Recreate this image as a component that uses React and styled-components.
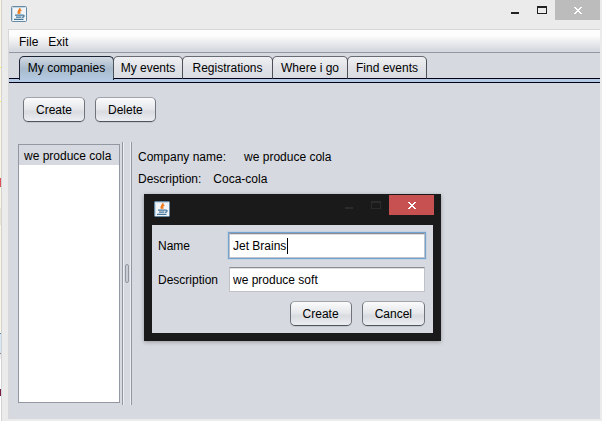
import React from "react";
import styled, { createGlobalStyle, css } from "styled-components";

const GlobalStyle = createGlobalStyle`
  * { box-sizing: border-box; }
  html, body, #root { height: 100%; margin: 0; }
  body {
    font: 12px/16px "Liberation Sans", Arial, sans-serif;
    color: #000;
    overflow: hidden;
  }
`;

const Desktop = styled.div`
  display: flex;
  height: 100vh;
`;

const EditorEdge = styled.div`
  flex: none;
  width: 2px;
  border-right: 1px solid #d2d2d2;
  background: linear-gradient(
    #fcf7e3 0 67px, #fbf05a 67px 68px, #fcf7e3 68px 101px, #fbf05a 101px 102px,
    #fcf7e3 102px 178px, #e0505c 178px 187px, #fcf7e3 187px 208px, #ece6d4 208px 225px,
    #fcf7e3 225px 333px, #4f87a5 333px 334px, #d6e8f8 334px 353px, #808488 353px 354px,
    #ececec 354px 359px, #ffffff 359px 389px, #7a2048 389px 396px, #ffffff 396px
  );
`;

const Frame = styled.div`
  flex: 1;
  min-width: 0;
  display: flex;
  flex-direction: column;
  padding: 0 2px 2px 6px;
  background: #ebebeb;
`;

const TitleBar = styled.header`
  display: flex;
  justify-content: space-between;
  align-items: flex-start;
  height: 29px;
  padding: 6px 0 0 3px;
`;

const WindowButtons = styled.div`
  display: flex;
  margin-top: -6px;
`;

const WindowButton = styled.button`
  display: grid;
  place-items: center;
  width: 27px;
  height: 20px;
  padding: 0;
  border: 0;
  background: none;
  color: #222;
  ${(p) =>
    p.$close &&
    css`
      width: 45px;
      background: #bcbcbc;
      color: #fff;
    `}
`;

const Client = styled.div`
  flex: 1;
  min-height: 0;
  display: flex;
  flex-direction: column;
  border: 1px solid #d8d8d8;
  border-right-width: 0;
  border-bottom-width: 0;
  background: #d6d9df;
`;

const MenuBar = styled.nav`
  display: flex;
  gap: 10px;
  height: 23px;
  padding: 4px 10px 0;
  border-bottom: 1px solid #9297a1;
  background: linear-gradient(#fdfdfd 0 25%, #e9eaed 60%, #d6d9df 90%);
`;

const MenuItem = styled.button`
  height: 16px;
  padding: 0;
  border: 0;
  background: none;
  font: inherit;
  color: #000;
`;

const TabStrip = styled.div`
  display: flex;
  flex: none;
  height: 30px;
  padding: 3px 10px 0;
  border-bottom: 1px solid #00001a;
  background: linear-gradient(transparent 25px, #00001a 25px 26px, #b4cae2 26px);
`;

const Tab = styled.button`
  width: ${(p) => p.$width}px;
  height: 23px;
  margin-right: -1px;
  padding: 1px 0 0;
  border: 1px solid #4c5058;
  border-top-color: #686b73;
  border-bottom-color: #00001a;
  border-radius: 5px 5px 0 0;
  background: linear-gradient(#f0f1f3, #e0e2e7 50%, #d9dce2);
  font: inherit;
  color: #000;
  white-space: nowrap;
  ${(p) =>
    p.$selected &&
    css`
      height: 24px;
      border-color: #1d2334;
      border-bottom: 0;
      padding-bottom: 2px;
      background: linear-gradient(#d2dae3, #a8bacb 50%, #b4cae2);
    `}
`;

const Toolbar = styled.div`
  display: flex;
  gap: 10px;
  padding: 14px 14px 0;
`;

const Button = styled.button`
  height: 25px;
  padding: 0 12px;
  border: 1px solid #6f737b;
  border-top-color: #a0a3aa;
  border-bottom-color: #50545c;
  border-radius: 5px;
  background: linear-gradient(#fbfbfc, #e5e7ea 48%, #d8dbe0 60%, #eceef2);
  box-shadow: 0 1px 0 #c3c7ce;
  font: inherit;
  color: #000;
`;

const Split = styled.div`
  flex: 1;
  min-height: 0;
  display: flex;
  padding: 20px 9px 14px;
`;

const CompanyList = styled.ul`
  width: 102px;
  margin: 2px 2px 2px 0;
  padding: 0;
  border: 1px solid #9297a1;
  background: #fff;
  list-style: none;
`;

const CompanyItem = styled.li`
  height: 20px;
  padding: 3px 5px 0;
  background: #d6d9df;
  white-space: nowrap;
`;

const Divider = styled.div`
  display: grid;
  place-items: center;
  width: 10px;
  border: solid #9297a1;
  border-width: 0 1px;
  box-shadow: inset 1px 0 #eceef2, inset -1px 0 #eceef2;
`;

const Grip = styled.span`
  width: 4px;
  height: 19px;
  border: 1px solid #9297a1;
  border-radius: 2px;
  background: #c8ccd4;
`;

const Details = styled.dl`
  flex: 1;
  display: flex;
  flex-direction: column;
  gap: 6px;
  margin: 0;
  padding: 7px 6px;
`;

const DetailRow = styled.div`
  display: flex;
  gap: ${(p) => p.$gap}px;
  dd { margin: 0; }
`;

const Dialog = styled.section`
  position: absolute;
  left: 144px;
  top: 194px;
  width: 297px;
  padding: 0 8px 8px;
  background: #1a1a1a;
  box-shadow: 0 1px 4px rgba(0, 0, 0, 0.3);
`;

const DialogTitle = styled.header`
  display: flex;
  justify-content: space-between;
  height: 31px;
  padding: 7px 0 0 2px;
`;

const DialogButtons = styled(WindowButtons)`
  margin: -6px -1px 0 0;
  ${WindowButton} { color: #2b2b2b; }
  ${WindowButton}:last-child { background: #c75050; color: #fff; }
`;

const Form = styled.form`
  display: grid;
  grid-template-columns: 63px 1fr;
  gap: 9px 8px;
  align-items: center;
  padding: 8px 8px 7px 6px;
  background: #d6d9df;
`;

const Field = styled.input`
  width: 100%;
  height: 25px;
  padding: 0 3px;
  border: 1px solid #c0c2c8;
  border-top-color: #8b8d92;
  border-radius: 0;
  outline: 0;
  background: #fff;
  box-shadow: inset 0 1px #dcdde0;
  font: inherit;
  color: #000;
  ${(p) =>
    p.$focused &&
    css`
      box-shadow: inset 0 1px #dcdde0, 0 0 0 1px #73a4d1, 0 0 0 2px #c3d1e0;
    `}
`;

const NameCell = styled.div`
  display: grid;
  align-items: center;
  > * { grid-area: 1 / 1; }
`;

const Caret = styled.span`
  justify-self: start;
  height: 16px;
  margin-left: 4px;
  padding-right: 1px;
  border-right: 1px solid #000;
  color: transparent;
  pointer-events: none;
`;

const Actions = styled.div`
  grid-column: 1 / -1;
  display: flex;
  justify-content: flex-end;
  gap: 10px;
`;

function JavaIcon() {
  return (
    <svg width="16" height="16" viewBox="0 0 16 16" aria-hidden="true">
      <rect x="0.5" y="0.5" width="15" height="15" rx="1" fill="#f1f5f8" stroke="#6689a3" />
      <path d="M1.5 14.5V1.5h13" fill="none" stroke="#c4d8e5" />
      <path d="M8.8 2c.8 2-3.2 3-1.3 5.8M10.3 4c-2 1-2.4 2.2-1 3.6" fill="none" stroke="#ef7d22" strokeWidth="1.5" />
      <path d="M4 9.2h7M5 11.2h5.4M3 13.4h9.5M11 9.2c2.9-.6 2.7 1.9 0 2.2" fill="none" stroke="#42769b" strokeWidth="1.3" />
    </svg>
  );
}

function Minimize() {
  return (
    <svg width="9" height="7" viewBox="0 0 9 7" aria-hidden="true">
      <path d="M1 5h8v2H1z" fill="currentColor" />
    </svg>
  );
}

function Maximize() {
  return (
    <svg width="10" height="8" viewBox="0 0 10 8" aria-hidden="true">
      <path d="M0 0h10v8H0zM1 2v5h8V2z" fill="currentColor" fillRule="evenodd" />
    </svg>
  );
}

function Close() {
  return (
    <svg width="8" height="7" viewBox="0 0 8 7" shapeRendering="crispEdges" aria-hidden="true">
      <path d="M0 0h2v1h1v1h2V1h1V0h2v1H7v1H6v1H5v1h1v1h1v1h1v1H6V6H5V5H3v1H2v1H0V6h1V5h1V4h1V3H2V2H1V1H0z" fill="currentColor" />
    </svg>
  );
}

function Controls({ group: Group = WindowButtons }) {
  return (
    <Group>
      <WindowButton type="button" aria-label="Minimize"><Minimize /></WindowButton>
      <WindowButton type="button" aria-label="Maximize"><Maximize /></WindowButton>
      <WindowButton type="button" aria-label="Close" $close><Close /></WindowButton>
    </Group>
  );
}

const tabs = [
  { label: "My companies", width: 95 },
  { label: "My events", width: 70 },
  { label: "Registrations", width: 91 },
  { label: "Where i go", width: 76 },
  { label: "Find events", width: 80 },
];

export default function App() {
  const [name, setName] = React.useState("Jet Brains");
  const [description, setDescription] = React.useState("we produce soft");

  return (
    <Desktop>
      <GlobalStyle />
      <EditorEdge />
      <Frame>
        <TitleBar>
          <JavaIcon />
          <Controls />
        </TitleBar>
        <Client>
          <MenuBar>
            <MenuItem type="button">File</MenuItem>
            <MenuItem type="button">Exit</MenuItem>
          </MenuBar>
          <TabStrip role="tablist">
            {tabs.map(({ label, width }, i) => (
              <Tab
                key={label}
                type="button"
                role="tab"
                aria-selected={i === 0}
                $selected={i === 0}
                $width={width}
              >
                {label}
              </Tab>
            ))}
          </TabStrip>
          <Toolbar>
            <Button type="button">Create</Button>
            <Button type="button">Delete</Button>
          </Toolbar>
          <Split>
            <CompanyList>
              <CompanyItem>we produce cola</CompanyItem>
            </CompanyList>
            <Divider>
              <Grip />
            </Divider>
            <Details>
              <DetailRow $gap={18}>
                <dt>Company name:</dt>
                <dd>we produce cola</dd>
              </DetailRow>
              <DetailRow $gap={12}>
                <dt>Description:</dt>
                <dd>Coca-cola</dd>
              </DetailRow>
            </Details>
          </Split>
        </Client>
      </Frame>
      <Dialog role="dialog" aria-label="Create company">
        <DialogTitle>
          <JavaIcon />
          <Controls group={DialogButtons} />
        </DialogTitle>
        <Form onSubmit={(e) => e.preventDefault()}>
          <label htmlFor="name">Name</label>
          <NameCell>
            <Field id="name" $focused value={name} onChange={(e) => setName(e.target.value)} />
            <Caret aria-hidden="true">{name}</Caret>
          </NameCell>
          <label htmlFor="description">Description</label>
          <Field id="description" value={description} onChange={(e) => setDescription(e.target.value)} />
          <Actions>
            <Button type="submit">Create</Button>
            <Button type="button">Cancel</Button>
          </Actions>
        </Form>
      </Dialog>
    </Desktop>
  );
}
